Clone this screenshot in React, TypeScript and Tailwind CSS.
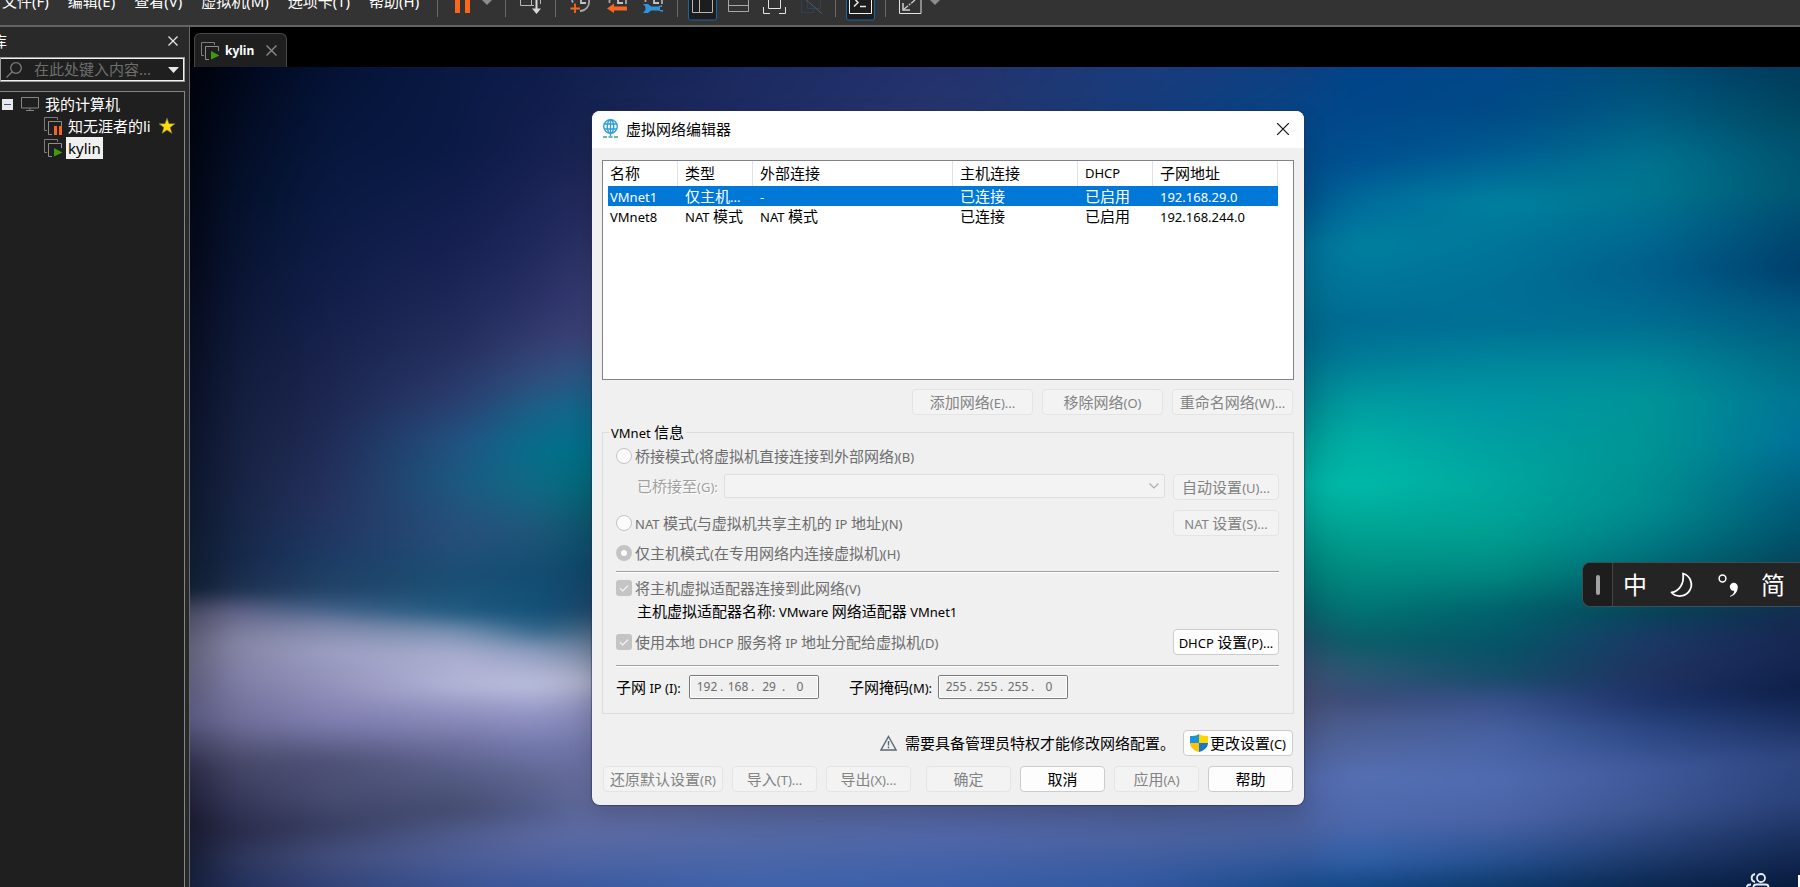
import { ReactNode } from "react";
import { clsx } from "clsx";

const SANS = "font-['Noto_Sans','Noto_Sans_CJK_SC',sans-serif]";

// Wallpaper colours, one vertical gradient per column, blended left to right
const WALL: { x: number; stops: [number, string][] }[] = [
  { x: 0, stops: [[0, "#00020a"], [183, "#040714"], [383, "#0b1228"], [523, "#0e1c2c"], [545, "#45455c"], [583, "#5c5b72"], [653, "#55547a"], [703, "#272740"], [753, "#17182b"], [820, "#131c35"]] },
  { x: 40, stops: [[0, "#010718"], [133, "#04102a"], [233, "#0b1635"], [383, "#16203f"], [493, "#162748"], [523, "#1d2f4f"], [545, "#65668a"], [573, "#8585a3"], [603, "#8180a6"], [653, "#6f6e99"], [693, "#494a6b"], [733, "#36375a"], [763, "#292b49"], [793, "#2b3459"], [820, "#232f5a"]] },
  { x: 140, stops: [[0, "#041235"], [133, "#091a42"], [233, "#131e4a"], [333, "#1d2751"], [433, "#26325f"], [493, "#1d3c66"], [523, "#234468"], [542, "#406088"], [558, "#7c86a9"], [583, "#9da0c3"], [623, "#9290bb"], [658, "#7c7bad"], [693, "#4f5277"], [733, "#464c70"], [758, "#383f62"], [788, "#434e7b"], [820, "#334378"]] },
  { x: 270, stops: [[0, "#091a44"], [83, "#0b1a46"], [183, "#172152"], [283, "#25305f"], [333, "#2b3e70"], [373, "#235282"], [413, "#1c5a82"], [463, "#27507b"], [513, "#1b4f74"], [545, "#205a80"], [566, "#7c94b5"], [588, "#abaecf"], [618, "#b4b6d8"], [643, "#9394c2"], [678, "#6e719f"], [703, "#585f88"], [743, "#454c70"], [768, "#4f5c8d"], [793, "#4c5d97"], [820, "#3a5494"]] },
  { x: 350, stops: [[0, "#0e1c4a"], [83, "#152050"], [183, "#212a5e"], [233, "#2a3166"], [273, "#343c70"], [313, "#31507f"], [343, "#1a6389"], [383, "#03718b"], [423, "#106a85"], [463, "#1e5779"], [503, "#134d71"], [543, "#125078"], [563, "#2c6388"], [581, "#7f95b8"], [598, "#a5abce"], [618, "#bcc0de"], [648, "#9396c5"], [678, "#757aaf"], [713, "#5d648f"], [743, "#525d8c"], [768, "#5a68a0"], [793, "#5162a0"], [820, "#3c589c"]] },
  { x: 400, stops: [[0, "#11214f"], [83, "#1a2552"], [143, "#252c5e"], [223, "#363b6f"], [273, "#3c4478"], [303, "#2c5484"], [343, "#0f678a"], [383, "#006e86"], [423, "#006674"], [453, "#08566b"], [503, "#0d4566"], [543, "#1c4668"], [573, "#5c7590"], [613, "#a7abc2"], [643, "#8587b3"], [683, "#6c72a4"], [733, "#616b9b"], [768, "#5c6aa4"], [803, "#4762a3"], [820, "#3b5a9f"]] },
  { x: 570, stops: [[0, "#1c2b62"], [43, "#1f2c65"], [733, "#5a6596"], [780, "#5068a6"], [820, "#3f63ab"]] },
  { x: 760, stops: [[0, "#23336c"], [43, "#27356c"], [733, "#55639a"], [773, "#4f66a8"], [820, "#3a5fa8"]] },
  { x: 960, stops: [[0, "#1a3c7c"], [43, "#153d7c"], [733, "#4f5f93"], [773, "#4a62a0"], [820, "#3058a0"]] },
  { x: 1115, stops: [[0, "#0d3f80"], [43, "#064587"], [133, "#004f88"], [183, "#006b93"], [233, "#006a8a"], [273, "#006585"], [333, "#007f8a"], [383, "#009b94"], [418, "#00ae9f"], [453, "#009d8f"], [493, "#008278"], [543, "#075f66"], [573, "#204d65"], [598, "#354c6c"], [633, "#454c70"], [663, "#4a5685"], [713, "#4f65a4"], [763, "#4a609d"], [793, "#33589a"], [820, "#174886"]] },
  { x: 1160, stops: [[0, "#00448a"], [43, "#00478a"], [93, "#004f90"], [133, "#006a9b"], [178, "#00809f"], [223, "#00769a"], [253, "#006b94"], [293, "#007c98"], [333, "#009ba0"], [373, "#00b0a5"], [418, "#00bba9"], [453, "#00aa99"], [493, "#009486"], [533, "#007d79"], [573, "#095f69"], [603, "#2a5873"], [633, "#3c4c7a"], [653, "#4a5c8d"], [708, "#5670b3"], [753, "#4e69ae"], [793, "#3160a8"], [820, "#144888"]] },
  { x: 1310, stops: [[0, "#004888"], [43, "#004a86"], [83, "#005a90"], [133, "#00809f"], [173, "#007799"], [223, "#006f97"], [263, "#007295"], [303, "#008a9e"], [343, "#0098a4"], [413, "#00a79f"], [463, "#00a094"], [503, "#008b83"], [543, "#00636d"], [583, "#065366"], [613, "#184d6b"], [633, "#38508a"], [663, "#4660a0"], [713, "#506bb0"], [753, "#4a63a6"], [793, "#27508f"], [820, "#0c3a6c"]] },
  { x: 1460, stops: [[0, "#004a74"], [43, "#005a80"], [93, "#00738f"], [123, "#00768f"], [163, "#006a90"], [203, "#005f8c"], [253, "#006c90"], [303, "#008a9a"], [333, "#009498"], [383, "#009494"], [443, "#008b8f"], [483, "#007580"], [513, "#005d68"], [543, "#064458"], [573, "#1c3866"], [603, "#203360"], [633, "#1c3369"], [663, "#2a4682"], [703, "#40599b"], [743, "#3c5592"], [783, "#233f74"], [820, "#0a2750"]] },
  { x: 1610, stops: [[0, "#003a5c"], [43, "#00465f"], [83, "#00526f"], [123, "#005672"], [163, "#00486f"], [203, "#003f6c"], [243, "#00567e"], [293, "#006a85"], [333, "#007593"], [373, "#007299"], [433, "#005c7c"], [473, "#004f68"], [513, "#0a3a50"], [553, "#15294f"], [593, "#162552"], [623, "#0d1f48"], [653, "#1a2f60"], [693, "#2e4680"], [733, "#2a427a"], [773, "#182f5c"], [820, "#081a3c"]] },
];

function Wallpaper() {
  return (
    <svg className="absolute inset-0 h-full w-full" viewBox="0 0 1610 820" preserveAspectRatio="none" aria-hidden="true">
      <defs>
        <filter id="soften" filterUnits="userSpaceOnUse" x="-100" y="-40" width="1810" height="900" colorInterpolationFilters="sRGB">
          <feGaussianBlur stdDeviation="18 6" />
        </filter>
        {WALL.map((col, i) => {
          const prev = i === 0 ? 0 : WALL[i - 1].x;
          return (
            <g key={col.x}>
              <linearGradient id={`wall-${i}`} gradientUnits="userSpaceOnUse" x1="0" y1="0" x2="0" y2="820">
                {col.stops.map(([y, color]) => (
                  <stop key={y} offset={y / 820} stopColor={color} />
                ))}
              </linearGradient>
              <linearGradient id={`ramp-${i}`} gradientUnits="userSpaceOnUse" x1={prev} y1="0" x2={Math.max(col.x, 1)} y2="0">
                <stop offset="0" stopColor="#fff" stopOpacity={i === 0 ? 1 : 0} />
                <stop offset="1" stopColor="#fff" />
              </linearGradient>
              <mask id={`fade-${i}`} maskUnits="userSpaceOnUse" x="-100" y="-40" width="1810" height="900">
                <rect x="-100" y="-40" width="1810" height="900" fill={`url(#ramp-${i})`} />
              </mask>
            </g>
          );
        })}
      </defs>
      <g filter="url(#soften)">
        {WALL.map((col, i) => (
          <rect key={col.x} x="-100" y="-40" width="1810" height="900" fill={`url(#wall-${i})`} mask={`url(#fade-${i})`} />
        ))}
      </g>
    </svg>
  );
}

// Chinese runs are set larger than the Latin ones
function Mixed({ text }: { text: string }) {
  const parts = text.match(/[\u3000-\u9fff]+|[^\u3000-\u9fff]+/g) ?? [];
  return (
    <span className="whitespace-pre">
      {parts.map((part, i) => (
        <span key={i} className={/[\u3000-\u9fff]/.test(part) ? "text-[15px]" : "text-[13px]"}>
          {part}
        </span>
      ))}
    </span>
  );
}

function Button({ text, className, disabled, icon }: { text: string; className?: string; disabled?: boolean; icon?: ReactNode }) {
  return (
    <button
      type="button"
      disabled={disabled}
      className={clsx(
        "flex h-[26px] shrink-0 items-center justify-center rounded border leading-5",
        disabled ? "border-[#e4e4e4] bg-[#f3f3f3] text-[#838383]" : "border-[#cccccc] bg-[#fdfdfd] text-black",
        className
      )}
    >
      {icon}
      <Mixed text={text} />
    </button>
  );
}

function Radio({ text, checked }: { text: string; checked?: boolean }) {
  return (
    <label className="flex h-5 items-center gap-[3px] text-[#6d6d6d]">
      <input
        type="radio"
        name="mode"
        disabled
        defaultChecked={checked}
        className="size-4 appearance-none rounded-full border border-[#c4c4c4] bg-[#fbfbfb] checked:border-5"
      />
      <Mixed text={text} />
    </label>
  );
}

function Check({ text }: { text: string }) {
  return (
    <label className="flex h-5 items-center gap-[3px] text-[#6d6d6d]">
      <span className="grid">
        <input type="checkbox" disabled defaultChecked className="col-start-1 row-start-1 size-4 appearance-none rounded-[3px] bg-[#c4c4c4]" />
        <svg className="col-start-1 row-start-1 size-4" viewBox="0 0 16 16" fill="none" stroke="#f7f7f7" strokeWidth="1.2">
          <path d="M4 8.2l2.8 2.8L12 5.600" />
        </svg>
      </span>
      <Mixed text={text} />
    </label>
  );
}

function IpField({ id, parts }: { id: string; parts: string[] }) {
  return (
    <div className="flex h-6 w-[130px] items-center rounded-xs border border-[#7a7a7a] pl-1 text-xs text-[#6d6d6d] outline outline-1 -outline-offset-2 outline-white">
      {parts.map((part, i) => (
        <span key={i} className="flex items-center">
          <input id={i === 0 ? id : undefined} aria-label={`${id} ${i + 1}`} disabled defaultValue={part} className="w-[26px] text-center" />
          {i < 3 && <span className="w-[5px]">.</span>}
        </span>
      ))}
    </div>
  );
}

function VmIcon({ state }: { state: "run" | "pause" }) {
  return (
    <svg className="h-[18px] w-[18px] shrink-0" viewBox="0 0 18 18" fill="none">
      <path d="M3 13.500H.5V.5h13V3" stroke="#7d7d7d" />
      <path d="M8 17.500H4.500v-13h13V9" stroke="#8e8e8e" />
      {state === "run" ? (
        <path d="M10 9l8.500 4.500L10 17.500z" fill="#3f9a0c" />
      ) : (
        <path d="M10 9h3v9h-3zM15 9h3v9h-3z" fill="#f4661b" />
      )}
    </svg>
  );
}

function Sep() {
  return <span className="h-[17px] w-px shrink-0 bg-[#6a6a6a]" />;
}

function Tool({ label, className, children }: { label: string; className: string; children: ReactNode }) {
  return (
    <button type="button" aria-label={label} className={clsx("h-[25px] shrink-0 overflow-hidden", className)}>
      {children}
    </button>
  );
}

function Toolbar() {
  const menus = ["文件(F)", "编辑(E)", "查看(V)", "虚拟机(M)", "选项卡(T)", "帮助(H)"];
  return (
    <header className="flex h-[27px] shrink-0 items-start overflow-hidden border-b-2 border-[#646464] bg-[#333333]">
      <nav className="flex w-[437px] shrink-0 gap-[19px] pl-0.5 text-[15px] text-white">
        {menus.map((m) => (
          <a key={m} href="#" className="-mt-[9px] h-5 leading-5 whitespace-nowrap">
            {m}
          </a>
        ))}
      </nav>
      <Sep />
      <Tool label="挂起" className="w-[67px]">
        <svg width="67" height="25" viewBox="0 0 67 25">
          <path d="M17 0h5v13h-5zM27 0h5v13h-5z" fill="#f9671d" />
          <path d="M44 0h10l-5 5z" fill="#8c8c8c" />
        </svg>
      </Tool>
      <Sep />
      <Tool label="发送按键" className="w-[49px]">
        <svg width="49" height="25" viewBox="0 0 49 25" fill="none">
          <path d="M14.500 0v5.500H28M25.500 0v5.500M34.500 0v4" stroke="#b9b9b9" />
          <path d="M30.500 0v9" stroke="#d8d8d8" strokeWidth="2" />
          <path d="M26 8.500h9l-4.500 5.500z" fill="#d8d8d8" />
        </svg>
      </Tool>
      <Sep />
      <Tool label="拍摄快照" className="w-[42px]">
        <svg width="42" height="25" viewBox="0 0 42 25" fill="none" strokeWidth="1.800">
          <path d="M33 0a9 9.500 0 0 1-9 11M16 0a8 8 0 0 0 1 2.500" stroke="#a8a8a8" />
          <path d="M25 0v3h5" stroke="#c2c2c2" />
          <path d="M19 3.500v9.500M14.500 8.500h9.500" stroke="#f9671d" />
        </svg>
      </Tool>
      <Tool label="恢复快照" className="w-9">
        <svg width="36" height="25" viewBox="0 0 36 25" fill="none">
          <path d="M11.500 0v3M28 0v4" stroke="#a8a8a8" strokeWidth="1.800" />
          <path d="M20 0v3h5" stroke="#c2c2c2" strokeWidth="1.800" />
          <path d="M9 8.500l7-5v3h13v4H16V13z" fill="#f9671d" />
        </svg>
      </Tool>
      <Tool label="管理快照" className="w-[43px]">
        <svg width="43" height="25" viewBox="0 0 43 25" fill="none">
          <path d="M11.500 0v2M28 0v4" stroke="#a8a8a8" strokeWidth="1.800" />
          <path d="M20 0v3h5" stroke="#c2c2c2" strokeWidth="1.800" />
          <path d="M9 4h5l3 2.500h7l4-1.500v2h-2v3h3v2l-5-1.500h-7L14 13H9l2.500-3V7z" fill="#2f94d8" />
        </svg>
      </Tool>
      <Sep />
      <div className="flex w-[157px] shrink-0 gap-[11px] pl-[10px]">
        <Tool label="显示库" className="w-[29px]">
          <svg width="29" height="25" viewBox="0 0 29 25" fill="none">
            <path d="M.5-2v20a2 2 0 0 0 2 2h24a2 2 0 0 0 2-2V-2z" fill="#1d1d1d" stroke="#1d65a0" />
            <path d="M4.500 0v12.500h20V0M11.500 0v12.500" stroke="#b5b5b5" />
          </svg>
        </Tool>
        <Tool label="缩略图" className="w-6">
          <svg width="24" height="25" viewBox="0 0 24 25" fill="none" stroke="#a9a9a9">
            <path d="M.5 0v11.500h20V0M.5 5.500h20" />
          </svg>
        </Tool>
        <Tool label="全屏" className="w-6">
          <svg width="24" height="25" viewBox="0 0 24 25" fill="none" stroke="#e2e2e2">
            <path d="M.5 7v6.500H7M22.500 7v6.500H16M5.500 0v8.500h12V0" />
          </svg>
        </Tool>
        <Tool label="Unity" className="w-6">
          <svg width="24" height="25" viewBox="0 0 24 25" fill="none">
            <path d="M3.500 0v12.500h12V9M9.500 0v8.500h13V0" stroke="#2e4253" />
            <path d="M8 0l16 13.500" stroke="#3f5e78" />
          </svg>
        </Tool>
      </div>
      <Sep />
      <Tool label="控制台" className="w-[49px]">
        <svg width="49" height="25" viewBox="0 0 49 25" fill="none">
          <path d="M10.500-2v20a2 2 0 0 0 2 2h24a2 2 0 0 0 2-2V-2z" fill="#1d1d1d" stroke="#1d65a0" />
          <path d="M13.500-1v14.500h22V-1" stroke="#f2f2f2" />
          <path d="M18 6.500l4-4L19.500 0M24 6.500h6" stroke="#e8e8e8" strokeWidth="1.500" />
        </svg>
      </Tool>
      <Sep />
      <Tool label="拉伸" className="w-16">
        <svg width="64" height="25" viewBox="0 0 64 25" fill="none">
          <path d="M13.500 0v13.500h21.500V0" stroke="#e2e2e2" />
          <path d="M17 3v7h7" stroke="#cfcfcf" strokeWidth="1.500" />
          <path d="M17.500 9.500L29 0" stroke="#cfcfcf" strokeWidth="1.300" strokeDasharray="6 1 2 1" />
          <path d="M44 0h10l-5 5z" fill="#8c8c8c" />
        </svg>
      </Tool>
    </header>
  );
}

function Sidebar() {
  return (
    <aside className="flex w-[190px] shrink-0 flex-col border-r border-[#6a6a6a] bg-[#292929] pr-1 text-[15px] text-white">
      <div className="flex h-[30px] items-center justify-between pr-[7px] pb-[3px]">
        <span className="-ml-2 leading-5">库</span>
        <button type="button" aria-label="关闭">
          <svg className="size-[10px]" viewBox="0 0 10 10" stroke="#e6e6e6" strokeWidth="1.300">
            <path d="M.5.5l9 9M9.500.5l-9 9" />
          </svg>
        </button>
      </div>
      <div className="flex h-[25px] items-center border-2 border-l-0 border-[#f0f0f0] bg-[#1f1f1f] pl-1.5 pr-1 outline outline-1 -outline-offset-1 outline-[#9a9a9a]">
        <svg className="size-4 shrink-0" viewBox="0 0 16 16" fill="none" stroke="#7c7c7c" strokeWidth="1.300">
          <circle cx="10" cy="6" r="5.300" />
          <path d="M6 10L.5 15.500" />
        </svg>
        <input aria-label="搜索" placeholder="在此处键入内容..." className="ml-3 w-full min-w-0 placeholder:text-[#6e6e6e]" />
        <button type="button" aria-label="搜索选项" className="ml-1 shrink-0">
          <svg className="h-1.5 w-[11px]" viewBox="0 0 11 6">
            <path d="M0 0h11L5.500 6z" fill="#e8e8e8" />
          </svg>
        </button>
      </div>
      <ul className="mt-[9px] flex-1 border-t border-r border-[#85858c] bg-[#1f1f1f] pt-px leading-5">
        <li className="flex h-[22px] items-center">
          <svg className="ml-0.5 size-[11px]" viewBox="0 0 11 11">
            <path d="M0 0h11v11H0z" fill="#e9e9e9" />
            <path d="M2 5.500h7" stroke="#3a53a4" />
          </svg>
          <svg className="ml-2 h-4 w-[18px]" viewBox="0 0 18 16" fill="none" stroke="#858585">
            <path d="M.5 1.500h17v10.500H.5zM9 12v2.500M5 14.500h8" />
          </svg>
          <span className="ml-1.5">我的计算机</span>
        </li>
        <li className="flex h-[22px] items-center pl-11">
          <VmIcon state="pause" />
          <span className="ml-1.5 whitespace-nowrap">知无涯者的li</span>
          <svg className="ml-2 size-4" viewBox="0 0 16 16">
            <path d="M8 0l2 5.700h6l-4.800 3.700L13 15.500 8 12l-5 3.500 1.800-6.100L0 5.700h6z" fill="#ffdc0a" stroke="#77723c" strokeWidth=".6" />
          </svg>
        </li>
        <li className="flex h-[22px] items-center pl-11">
          <VmIcon state="run" />
          <span className="ml-1 bg-[#f0f0f0] px-0.5 leading-[22px] text-black">kylin</span>
        </li>
      </ul>
    </aside>
  );
}

const COLS = [
  { name: "名称", w: "w-[75px]" },
  { name: "类型", w: "w-[75px]" },
  { name: "外部连接", w: "w-[200px]" },
  { name: "主机连接", w: "w-[125px]" },
  { name: "DHCP", w: "w-[75px]" },
  { name: "子网地址", w: "w-[125px]" },
];
const ROWS = [
  ["VMnet1", "仅主机...", "-", "已连接", "已启用", "192.168.29.0"],
  ["VMnet8", "NAT 模式", "NAT 模式", "已连接", "已启用", "192.168.244.0"],
];

function NetworkTable() {
  return (
    <div className="h-[220px] border border-[#82828a] bg-white">
      <table className="table-fixed border-separate border-spacing-0 text-left leading-5">
        <thead>
          <tr className="h-[25px]">
            {COLS.map((c) => (
              <th key={c.name} className={clsx("border-r border-[#e2e2e2] p-0 pb-0.5 pl-[7px] font-normal", c.w)}>
                <Mixed text={c.name} />
              </th>
            ))}
          </tr>
        </thead>
        <tbody>
          {ROWS.map((row, i) => (
            <tr key={row[0]} className={clsx("h-5", i === 0 && "bg-[#0078d7] text-white")}>
              {row.map((cell, j) => (
                <td key={j} className={clsx("h-5 p-0 leading-4", j === 0 ? "border-l-5 border-white pl-[2px]" : "pl-[7px]")}>
                  <Mixed text={cell} />
                </td>
              ))}
            </tr>
          ))}
        </tbody>
      </table>
    </div>
  );
}

function Rule({ className }: { className: string }) {
  return <hr className={clsx("h-0.5 border-t border-b border-t-[#a0a0a0] border-b-white", className)} />;
}

function Dialog() {
  return (
    <section
      role="dialog"
      aria-label="虚拟网络编辑器"
      className="absolute top-11 left-[402px] w-[712px] overflow-hidden rounded-lg bg-[#f0f0f0] text-black shadow-[0_10px_24px_rgba(0,0,0,0.15),0_0_1px_1px_rgba(40,50,80,0.5)]"
    >
      <div className="flex h-[37px] items-center bg-white pr-[15px] pb-0.5 pl-[10px]">
        <svg className="h-[19px] w-[17px]" viewBox="0 0 17 19" fill="none" stroke="#2f9fd6" strokeWidth="1.400">
          <circle cx="8.500" cy="7.500" r="6.800" />
          <ellipse cx="8.500" cy="7.500" rx="3.200" ry="6.800" />
          <path d="M2 5h13M2 10h13M8.500 1v16" />
          <path d="M1 18h4M6.500 18h4M12 18h4" stroke="#3aa68d" strokeWidth="1.500" />
        </svg>
        <h1 className="ml-[7px] flex-1 text-[15px] leading-5">虚拟网络编辑器</h1>
        <button type="button" aria-label="关闭窗口">
          <svg className="size-3" viewBox="0 0 12 12" stroke="#111" strokeWidth="1.200">
            <path d="M0 0l12 12M12 0L0 12" />
          </svg>
        </button>
      </div>

      <div className="px-[10px] pt-3 pb-[13px]">
        <NetworkTable />

        <div className="mt-[9px] flex justify-end gap-[9px] pr-px">
          <Button text="添加网络(E)..." disabled className="w-[121px]" />
          <Button text="移除网络(O)" disabled className="w-[121px]" />
          <Button text="重命名网络(W)..." disabled className="w-[121px]" />
        </div>

        <fieldset className="mt-[7px] border border-[#dcdcdc] pr-[14px] pb-[14px] pl-[13px]">
          <legend className="-ml-[7px] h-5 px-0.5 leading-5">
            <Mixed text="VMnet 信息" />
          </legend>
          <div className="mt-px flex h-[26px] items-center">
            <Radio text="桥接模式(将虚拟机直接连接到外部网络)(B)" />
          </div>
          <div className="mt-[5px] flex justify-between">
            <label htmlFor="bridge" className="pl-[21px] leading-6 text-[#a0a0a0] [text-shadow:1px_1px_0_#fff]">
              <Mixed text="已桥接至(G):" />
            </label>
            <div className="relative ml-1.5 flex-1">
              <select id="bridge" disabled className="h-6 w-full appearance-none rounded-xs border border-[#dedede] bg-[#f3f3f3]" />
              <svg className="pointer-events-none absolute top-2 right-1.5 h-2 w-[10px]" viewBox="0 0 10 8" fill="none" stroke="#ababab" strokeWidth="1.200">
                <path d="M.5 1.500L5 6l4.500-4.500" />
              </svg>
            </div>
            <Button text="自动设置(U)..." disabled className="ml-2 w-[106px]" />
          </div>
          <div className="mt-[10px] flex items-center justify-between">
            <Radio text="NAT 模式(与虚拟机共享主机的 IP 地址)(N)" />
            <Button text="NAT 设置(S)..." disabled className="w-[106px]" />
          </div>
          <div className="mt-[7px]">
            <Radio text="仅主机模式(在专用网络内连接虚拟机)(H)" checked />
          </div>
          <Rule className="mt-2" />
          <div className="mt-[5px]">
            <Check text="将主机虚拟适配器连接到此网络(V)" />
          </div>
          <p className="mt-[3px] pl-[21px] leading-5">
            <Mixed text="主机虚拟适配器名称: VMware 网络适配器 VMnet1" />
          </p>
          <div className="mt-[7px] flex items-center justify-between">
            <Check text="使用本地 DHCP 服务将 IP 地址分配给虚拟机(D)" />
            <Button text="DHCP 设置(P)..." className="w-[106px]" />
          </div>
          <Rule className="mt-[10px]" />
          <div className="mt-2 flex items-center">
            <label htmlFor="subnet-ip" className="w-[73px] leading-5">
              <Mixed text="子网 IP (I):" />
            </label>
            <IpField id="subnet-ip" parts={["192", "168", "29", "0"]} />
            <label htmlFor="subnet-mask" className="ml-[30px] w-[89px] leading-5">
              <Mixed text="子网掩码(M):" />
            </label>
            <IpField id="subnet-mask" parts={["255", "255", "255", "0"]} />
          </div>
        </fieldset>

        <div className="mt-4 flex items-center justify-end pr-px">
          <svg className="h-4 w-[17px]" viewBox="0 0 17 16" fill="none" stroke="#5b6873" strokeWidth="1.400">
            <path d="M8.500 1.500L16 15H1zM8.500 6v4.500M8.500 11.500v1.700" />
          </svg>
          <span className="ml-2 leading-5">
            <Mixed text="需要具备管理员特权才能修改网络配置。" />
          </span>
          <Button
            text="更改设置(C)"
            className="ml-2 w-[110px] gap-0.5"
            icon={
              <svg className="h-[18px] w-[18px]" viewBox="0 0 18 18">
                <path d="M9 0C6 2 3 2 0 2v7h9z" fill="#1c93da" />
                <path d="M9 0c3 2 6 2 9 2v7H9z" fill="#ffd500" />
                <path d="M0 9c0 5 5 8 9 9V9z" fill="#fdc400" />
                <path d="M18 9c0 5-5 8-9 9V9z" fill="#1876cf" />
              </svg>
            }
          />
        </div>

        <div className="mt-[10px] flex gap-[9px] pl-px">
          <Button text="还原默认设置(R)" disabled className="w-[120px]" />
          <Button text="导入(T)..." disabled className="w-[85px]" />
          <Button text="导出(X)..." disabled className="w-[85px]" />
          <Button text="确定" disabled className="ml-1.5 w-[85px]" />
          <Button text="取消" className="w-[85px]" />
          <Button text="应用(A)" disabled className="w-[85px]" />
          <Button text="帮助" className="w-[85px]" />
        </div>
      </div>
    </section>
  );
}

function ImeBar() {
  return (
    <div className="absolute top-[495px] right-0 flex h-[45px] w-[218px] items-center rounded-l-lg border border-r-0 border-[#3d4f52] bg-[#242424] text-2xl text-white">
      <div className="flex h-full w-[30px] items-center justify-center rounded-l-lg border-r border-[#444444] bg-[#1d1d1d]">
        <span className="h-5 w-1 rounded-full bg-[#a3a3a3]" />
      </div>
      <div className="flex flex-1 items-center justify-between pr-[15px] pl-[10px] leading-8">
        <button type="button">中</button>
        <button type="button" aria-label="半角">
          <svg className="size-[26px]" viewBox="0 0 26 26" fill="none" stroke="#fff" strokeWidth="1.800">
            <path d="M13 1.500a11.500 11.500 0 1 1-11.500 19C9 19.500 14.500 12 13 1.500z" strokeLinejoin="round" />
          </svg>
        </button>
        <button type="button" aria-label="中文标点">
          <svg className="h-[26px] w-5" viewBox="0 0 20 26" fill="none">
            <circle cx="4.500" cy="6.500" r="3.400" stroke="#fff" strokeWidth="1.500" />
            <path d="M12 24c3-1 4.200-3 4.200-5.200a4 4 0 1 1 3.600-4c0 5-3 8.500-7.300 10z" fill="#fff" />
          </svg>
        </button>
        <button type="button">简</button>
      </div>
    </div>
  );
}

export default function App() {
  return (
    <div className={clsx("flex h-screen flex-col overflow-hidden bg-black", SANS)}>
      <Toolbar />
      <div className="flex min-h-0 flex-1">
        <Sidebar />
        <main className="flex min-w-0 flex-1 flex-col">
          <div className="flex h-10 items-end bg-black pl-1">
            <div className="flex h-[34px] w-[93px] items-center rounded-t-md border border-b-0 border-[#474747] bg-[#1f1f1f] pl-1.5">
              <VmIcon state="run" />
              <span className="ml-1.5 text-xs font-bold text-white">kylin</span>
              <button type="button" aria-label="关闭标签" className="ml-3">
                <svg className="size-[11px]" viewBox="0 0 11 11" stroke="#858585" strokeWidth="1.500">
                  <path d="M.5.5l10 10M10.500.5l-10 10" />
                </svg>
              </button>
            </div>
          </div>
          <div className="relative flex-1 overflow-hidden">
            <Wallpaper />
            <Dialog />
            <ImeBar />
            <svg className="absolute right-7 bottom-0 h-[14px] w-7" viewBox="0 0 28 14" fill="none" stroke="#e6ebf2" strokeWidth="1.800">
              <circle cx="17" cy="5" r="4" />
              <path d="M11 1C6.500 2 6.500 8 11 9M3 14c0-2 1-2.500 4-2.500M9.500 14c0-2 1-2.500 3-2.500h9c2 0 3 .5 3 2.500" />
            </svg>
            <span className="absolute right-0 bottom-0 h-3 w-0.5 bg-white" />
          </div>
        </main>
      </div>
    </div>
  );
}
